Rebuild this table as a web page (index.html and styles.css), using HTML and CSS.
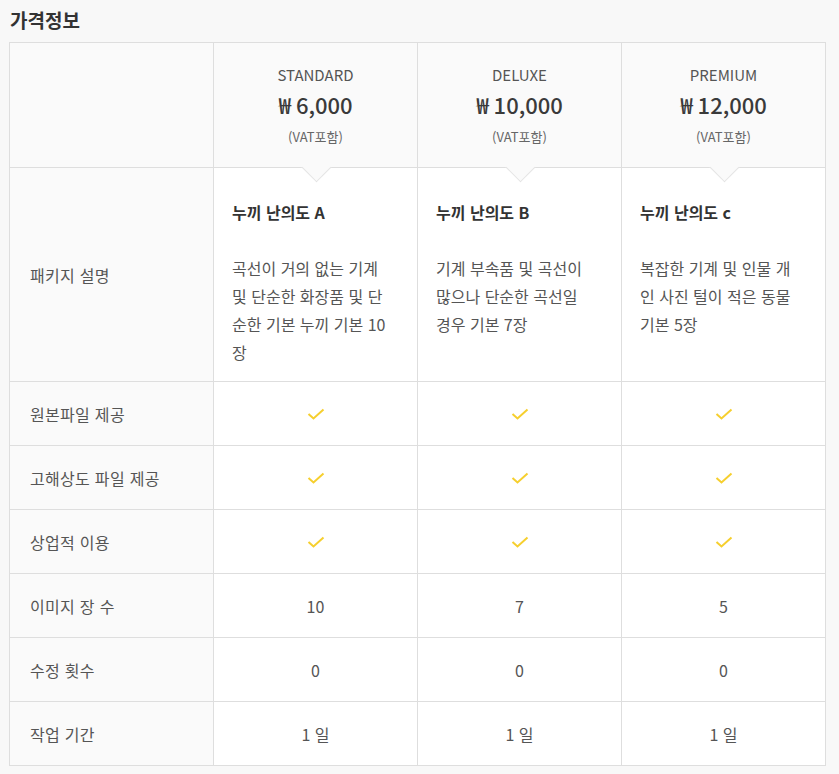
FILE: index.html
```html
<!DOCTYPE html>
<html lang="ko">
<head>
<meta charset="utf-8">
<link rel="stylesheet" href="styles.css">
</head>
<body>
<h2 class="title">가격정보</h2>
<table class="price">
  <colgroup><col class="c"><col class="c"><col class="c"><col class="c"></colgroup>
  <tr class="head">
    <th class="label"></th>
    <th class="plan"><div class="name">STANDARD</div><div class="amt">₩ 6,000</div><div class="vat">(VAT포함)</div></th>
    <th class="plan"><div class="name">DELUXE</div><div class="amt">₩ 10,000</div><div class="vat">(VAT포함)</div></th>
    <th class="plan"><div class="name">PREMIUM</div><div class="amt">₩ 12,000</div><div class="vat">(VAT포함)</div></th>
  </tr>
  <tr class="desc">
    <td class="label">패키지 설명</td>
    <td class="txt"><div class="dt">누끼 난의도 A</div><div class="dd"><span>곡선이 거의 없는 기계</span><span>및 단순한 화장품 및 단</span><span>순한 기본 누끼 기본 10</span><span>장</span></div></td>
    <td class="txt"><div class="dt">누끼 난의도 B</div><div class="dd"><span>기계 부속품 및 곡선이</span><span>많으나 단순한 곡선일</span><span>경우 기본 7장</span></div></td>
    <td class="txt"><div class="dt">누끼 난의도 c</div><div class="dd"><span>복잡한 기계 및 인물 개</span><span>인 사진 털이 적은 동물</span><span>기본 5장</span></div></td>
  </tr>
  <tr class="row">
    <td class="label">원본파일 제공</td>
    <td class="v"><svg class="chk" width="18" height="12" viewBox="0 0 18 12"><polyline points="1.5,6 6.5,10.5 16.5,1.5" fill="none" stroke="#f6cf2e" stroke-width="2"/></svg></td>
    <td class="v"><svg class="chk" width="18" height="12" viewBox="0 0 18 12"><polyline points="1.5,6 6.5,10.5 16.5,1.5" fill="none" stroke="#f6cf2e" stroke-width="2"/></svg></td>
    <td class="v"><svg class="chk" width="18" height="12" viewBox="0 0 18 12"><polyline points="1.5,6 6.5,10.5 16.5,1.5" fill="none" stroke="#f6cf2e" stroke-width="2"/></svg></td>
  </tr>
  <tr class="row">
    <td class="label">고해상도 파일 제공</td>
    <td class="v"><svg class="chk" width="18" height="12" viewBox="0 0 18 12"><polyline points="1.5,6 6.5,10.5 16.5,1.5" fill="none" stroke="#f6cf2e" stroke-width="2"/></svg></td>
    <td class="v"><svg class="chk" width="18" height="12" viewBox="0 0 18 12"><polyline points="1.5,6 6.5,10.5 16.5,1.5" fill="none" stroke="#f6cf2e" stroke-width="2"/></svg></td>
    <td class="v"><svg class="chk" width="18" height="12" viewBox="0 0 18 12"><polyline points="1.5,6 6.5,10.5 16.5,1.5" fill="none" stroke="#f6cf2e" stroke-width="2"/></svg></td>
  </tr>
  <tr class="row">
    <td class="label">상업적 이용</td>
    <td class="v"><svg class="chk" width="18" height="12" viewBox="0 0 18 12"><polyline points="1.5,6 6.5,10.5 16.5,1.5" fill="none" stroke="#f6cf2e" stroke-width="2"/></svg></td>
    <td class="v"><svg class="chk" width="18" height="12" viewBox="0 0 18 12"><polyline points="1.5,6 6.5,10.5 16.5,1.5" fill="none" stroke="#f6cf2e" stroke-width="2"/></svg></td>
    <td class="v"><svg class="chk" width="18" height="12" viewBox="0 0 18 12"><polyline points="1.5,6 6.5,10.5 16.5,1.5" fill="none" stroke="#f6cf2e" stroke-width="2"/></svg></td>
  </tr>
  <tr class="row">
    <td class="label">이미지 장 수</td>
    <td class="v">10</td><td class="v">7</td><td class="v">5</td>
  </tr>
  <tr class="row">
    <td class="label">수정 횟수</td>
    <td class="v">0</td><td class="v">0</td><td class="v">0</td>
  </tr>
  <tr class="row">
    <td class="label">작업 기간</td>
    <td class="v">1 일</td><td class="v">1 일</td><td class="v">1 일</td>
  </tr>
</table>
</body>
</html>
```

FILE: styles.css
```css
html, body {
  margin: 0;
  background: #f8f8f8;
}
body {
  padding: 0 13px 0 9px;
  font-family: "Noto Sans CJK KR", "Noto Sans", sans-serif;
  color: #555;
}
.title {
  margin: 0;
  padding: 6px 0 0 1px;
  height: 42px;
  box-sizing: border-box;
  font-size: 19px;
  line-height: 28px;
  font-weight: 700;
  color: #333;
}
.price {
  width: 817px;
  border-collapse: collapse;
  table-layout: fixed;
  border: 1px solid #dedede;
}
.price th, .price td {
  border: 1px solid #dedede;
  padding: 0;
  vertical-align: middle;
}
.c { width: 204px; }
.label {
  background: #fafafa;
  text-align: left;
  padding-left: 20px !important;
  font-size: 16px;
  letter-spacing: 0.3px;
  font-weight: 400;
  color: #555;
}
.head th { background: #fafafa; height: 124px; }
.plan {
  position: relative;
  text-align: center;
  font-weight: 400;
}
.plan::after {
  content: "";
  position: absolute;
  left: 50%;
  bottom: -11px;
  width: 20px;
  height: 20px;
  margin-left: -10px;
  background: #fafafa;
  border-right: 1px solid #e3e3e3;
  border-bottom: 1px solid #e3e3e3;
  transform: rotate(45deg);
  z-index: 1;
}
.name { font-size: 15px; line-height: 20px; color: #555; }
.amt { font-size: 22px; line-height: 32px; font-weight: 500; color: #3a3a3a; margin-top: 3px; }
.vat { font-size: 13px; line-height: 18px; color: #666; margin-top: 8px; }
.desc td { height: 213px; }
.txt {
  background: #fff;
  padding: 0 10px 0 18px !important;
  vertical-align: top !important;
}
.dt {
  margin-top: 32px;
  font-size: 16px;
  line-height: 24px;
  font-weight: 700;
  color: #333;
}
.dd {
  margin-top: 30px;
  font-size: 16px;
  line-height: 28px;
  color: #555;
}
.dd span { display: block; white-space: nowrap; }
.row td { height: 63px; }
.v {
  background: #fff;
  text-align: center;
  font-size: 16px;
  color: #555;
}
.chk { display: block; margin: 0 auto; }
```
